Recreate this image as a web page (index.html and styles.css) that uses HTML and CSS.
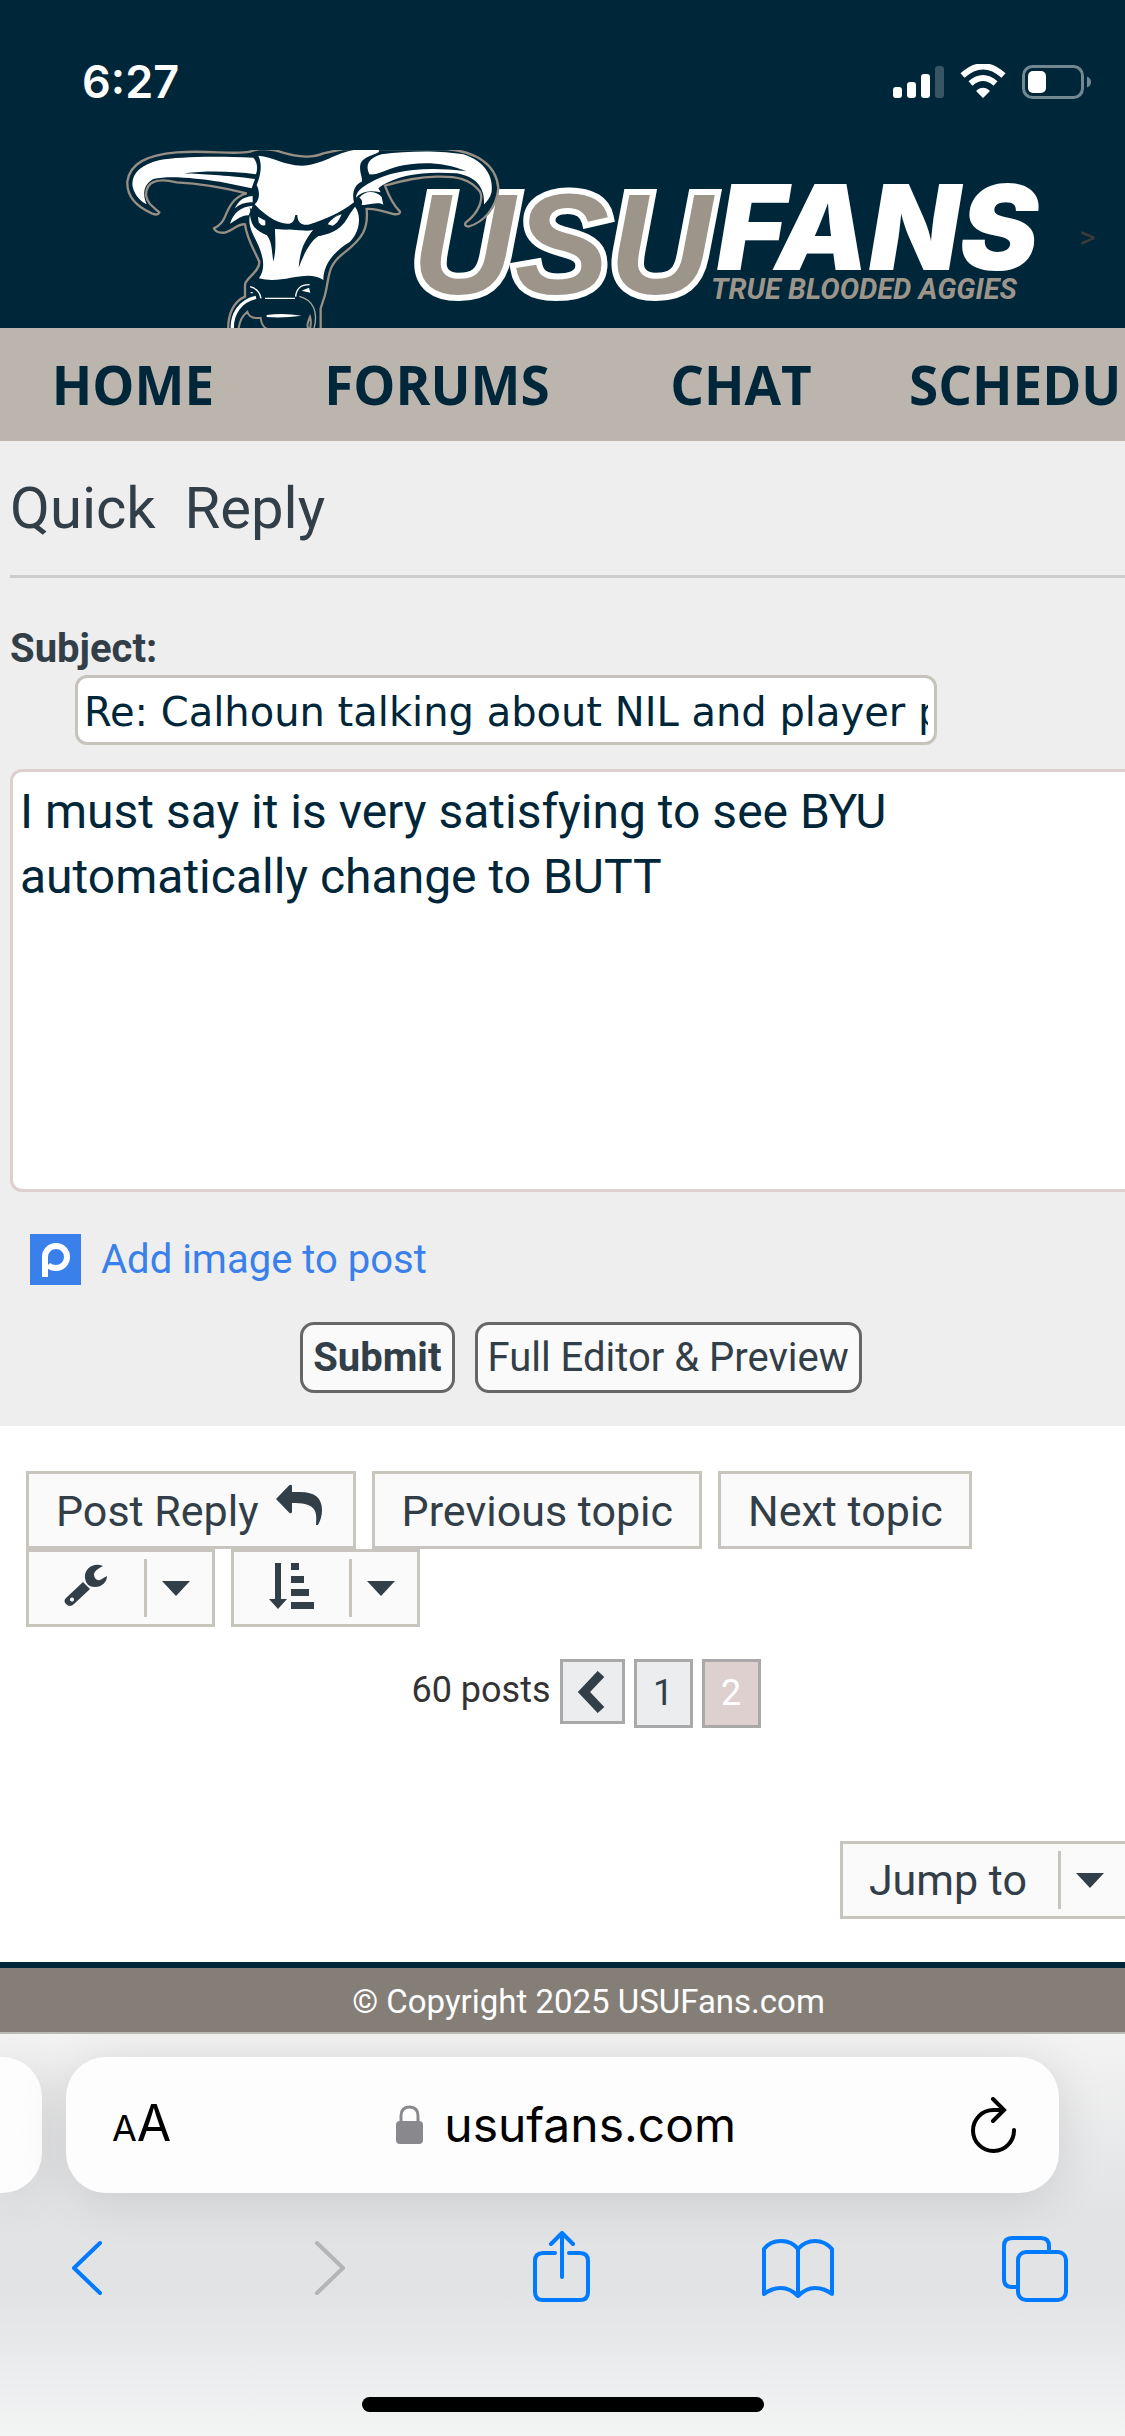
FILE: index.html
```html
<!DOCTYPE html>
<html lang="en">
<head>
<meta charset="utf-8">
<meta name="viewport" content="width=device-width, initial-scale=1">
<title>USUFans - Quick Reply</title>
<link rel="stylesheet" href="styles.css">
</head>
<body>
<div class="status-bar">
  <span class="clock">6:27</span>
  <svg class="status-icons" viewBox="0 0 200 36" aria-label="Signal, Wi-Fi, battery">
    <g fill="#fff">
      <rect x="1" y="23" width="9" height="11" rx="3"/>
      <rect x="15" y="18" width="9" height="16" rx="3"/>
      <rect x="29" y="10" width="9" height="24" rx="3"/>
      <rect x="43" y="2" width="9" height="32" rx="3" opacity=".22"/>
      <path d="M91 34 84.500 27.500Q84 26.500 85 26Q91 21.500 97 26Q98 26.500 97.500 27.500Z"/>
      <rect x="136" y="7" width="18" height="22" rx="5"/>
      <path d="M195 12.500Q199 14 199 18Q199 22 195 23.500Z" opacity=".45"/>
    </g>
    <g fill="none" stroke="#fff">
      <path d="M70.500 11.500Q91-7 111.500 11.500" stroke-width="6"/>
      <path d="M78.500 19.500Q91 8.500 103.500 19.500" stroke-width="6"/>
      <rect x="131.500" y="2.500" width="59" height="31" rx="9" stroke-width="3" opacity=".45"/>
    </g>
  </svg>
</div>

<header class="site-header">
  <a class="logo" href="#" aria-label="USUFans home">
    <svg viewBox="0 0 1072 178">
      <text class="logo-usu" x="412" y="144">USU</text>
      <text class="logo-fans" x="717" y="120">FANS</text>
      <text class="logo-tag" x="711" y="149">TRUE BLOODED AGGIES</text>
      <g transform="translate(110 -15) scale(.33333)">
        <path fill="#00263a" stroke="#978f84" stroke-width="7" d="M355 590C352 540 370 500 405 485V450C405 430 450 410 448 380C430 340 410 310 405 268C385 265 370 285 345 293Q318 295 312 280Q335 270 345 245C355 220 370 185 410 175C330 155 260 145 200 142C140 128 108 140 108 180C112 205 125 212 148 232C145 240 138 240 125 235C80 215 50 185 52 140C60 85 110 60 200 52C300 45 370 60 420 50C440 42 470 40 500 47C560 68 610 68 640 55L700 42H1010C1100 50 1160 90 1165 160C1160 220 1120 262 1075 275Q1060 272 1068 262C1110 230 1120 190 1110 170C1080 130 1040 124 980 125C920 125 870 140 825 152C835 180 850 210 870 230Q870 240 850 237C820 230 800 220 770 222C775 280 760 310 700 355C650 395 660 420 645 480L632 520V590"/>
        <g fill="#fff">
          <path d="M430 68C300 62 200 66 150 75C90 88 62 120 68 155C75 185 95 200 110 208C98 180 98 150 130 132C180 120 260 130 330 140L425 160L435 132C340 120 280 118 222 115C300 106 370 110 438 118C445 95 440 80 430 68Z"/>
          <path d="M445 62C490 66 520 90 575 92C640 90 680 50 740 44H805C818 58 765 58 752 85C745 110 760 130 755 140C730 150 726 180 732 202C690 235 640 255 600 268C575 274 562 262 562 240H556C552 262 545 270 520 265C480 255 450 225 434 208C450 195 450 170 440 150C452 120 458 90 445 62Z"/>
          <path d="M815 58C900 46 1000 47 1060 58C1130 80 1150 130 1145 170C1140 190 1130 200 1122 208C1125 160 1100 125 1040 115C940 108 870 120 818 150L805 160L812 172Q760 160 738 188C738 165 770 148 795 135C840 112 930 90 1070 109C1000 78 920 80 860 95C825 105 805 120 778 118C765 90 775 70 815 58Z"/>
          <path d="M748 188C765 165 797 166 815 186L820 209C800 198 775 213 755 209Q760 195 748 188Z"/>
          <path d="M428 183C395 186 386 200 374 220C390 206 410 200 428 202Z"/>
          <path d="M360 266C370 235 390 215 428 212L416 241C395 240 380 255 360 266Z"/>
          <path d="M420 240C425 280 445 290 470 300C487 320 485 350 490 380C500 340 495 310 495 282C540 280 570 290 610 285C580 320 570 350 566 398C580 360 600 320 625 303C680 295 710 250 735 215C755 240 750 290 720 320C670 350 640 390 640 435C590 400 520 450 447 430C475 390 450 340 430 300C420 280 415 260 420 240Z"/>
          <path d="M444 245L466 255V270Q455 278 446 262Z"/>
          <path d="M653 265Q665 245 698 235Q685 265 668 272Z"/>
          <path d="M575 467L597 458L601 473Z"/>
          <path d="M470 540Q520 533 575 542Q520 550 470 546Z"/>
        </g>
        <path fill="#00263a" d="M418 215C430 235 470 262 520 275L558 262L600 276C640 265 690 240 736 205L712 250C690 290 650 300 620 303C600 310 590 330 580 350C590 325 595 300 610 285Q580 290 556 275Q540 287 495 282L494 340C490 310 485 300 470 300C440 290 430 260 418 215Z"/>
        <path fill="#fff" d="M444 245L466 257V270Q455 276 446 262ZM653 268Q665 248 695 238Q684 266 668 272Z"/>
        <g fill="none" stroke="#fff" stroke-width="4">
          <path d="M420 455Q448 462 453 490M422 473H428M465 490H555M557 485Q560 448 599 449"/>
          <path d="M568 484C610 495 625 530 612 580" stroke="#aaa59c"/>
          <path d="M438 487C388 498 365 540 367 582" stroke-width="10"/>
          <path d="M386 582C388 555 400 540 412 530Q418 552 452 549Q455 575 472 582M600 582Q585 580 600 545Q605 560 600 582" stroke="#978f84" stroke-width="6"/>
        </g>
      </g>
    </svg>
  </a>
  <span class="header-more">&gt;</span>
</header>

<nav class="main-nav">
  <a href="#">HOME</a><a href="#">FORUMS</a><a href="#">CHAT</a><a href="#">SCHEDULE</a>
</nav>

<main>
  <form class="quick-reply">
    <h2>Quick&nbsp; Reply</h2>
    <label for="subject">Subject:</label>
    <input id="subject" class="subject" type="text" value="Re: Calhoun talking about NIL and player pay">
    <textarea class="message" aria-label="Message">I must say it is very satisfying to see BYU
automatically change to BUTT</textarea>
    <a class="add-image" href="#">
      <svg viewBox="0 0 51 51" aria-hidden="true"><rect width="51" height="51" fill="#3a80ea"/><path d="M15 43V23A11 11 0 1 1 26 34Q21 34 18 31" fill="none" stroke="#fff" stroke-width="6"/></svg>
      Add image to post
    </a>
    <div class="form-actions">
      <button class="btn submit" type="submit">Submit</button>
      <button class="btn" type="button">Full Editor &amp; Preview</button>
    </div>
  </form>

  <section class="topic-tools">
    <div class="action-bar">
      <button class="tool" type="button">Post Reply
        <svg class="reply-icon" viewBox="0 0 48 42" aria-hidden="true"><path d="M1 15 14.500 1Q16.500 0 17 2V8H25C40 8 47 14 47 26Q47 34 43 41H41C43 24 38 19 17 19V28Q16.500 30 14.500 29Z"/></svg>
      </button>
      <button class="tool" type="button">Previous topic</button>
      <button class="tool" type="button">Next topic</button>
      <button class="tool split" type="button" aria-label="Topic tools">
        <svg class="tool-icon" viewBox="0 0 46 46" aria-hidden="true"><path fill-rule="evenodd" d="M19 19 26 26 10 41Q6 45 2 41Q-1 38 2 35ZM6 36A2 2 0 1 0 10 37A2 2 0 1 0 6 36Z"/><path d="M39 3C29-1 20 6 21 15Q22 24 31 24C38 24 43 19 43 13L36 17Q31 18 30 12Q29 8 39 3Z"/></svg>
        <span class="caret"></span>
      </button>
      <button class="tool split" type="button" aria-label="Sort options">
        <svg class="tool-icon" viewBox="0 0 46 46" aria-hidden="true"><path d="M6 0H12V36H18L9 46 0 36H6ZM22 0H30V7H22ZM22 13H35V20H22ZM22 26H40V33H22ZM22 39H45V46H22Z"/></svg>
        <span class="caret"></span>
      </button>
    </div>
    <div class="pagination">
      <span>60 posts</span>
      <a class="page prev" href="#" aria-label="Previous page"><svg viewBox="0 0 30 42" aria-hidden="true"><path d="M24 3 7 21 24 39" fill="none" stroke="#323e48" stroke-width="9"/></svg></a>
      <a class="page" href="#">1</a>
      <a class="page current" href="#" aria-current="page">2</a>
    </div>
    <div class="jump-row">
      <button class="tool split jump" type="button">Jump to<span class="caret"></span></button>
    </div>
  </section>
</main>

<footer class="copyright">© Copyright 2025 USUFans.com</footer>

<div class="browser-bar">
  <div class="tabs">
    <div class="tab tab-previous"></div>
    <div class="tab address">
      <button class="text-size" type="button" aria-label="Page settings"><small>A</small>A</button>
      <span class="url">
        <svg viewBox="0 0 28 40" aria-hidden="true"><rect y="16" width="27" height="23" rx="4" fill="#89888d"/><path d="M5 18V11Q5 2 13.500 2T22 11V18" fill="none" stroke="#89888d" stroke-width="3"/></svg>
        usufans.com
      </span>
      <button class="reload" type="button" aria-label="Reload"><svg viewBox="0 0 46 56"><path d="M43 33A20.500 20.500 0 1 1 22.500 13H32M22 2 33 13 22 24" fill="none" stroke="#000" stroke-width="4" stroke-linecap="round"/></svg></button>
    </div>
  </div>
  <div class="toolbar">
    <button type="button" aria-label="Back"><svg viewBox="0 0 72 72"><path d="M50 12 24 37 50 62"/></svg></button>
    <button type="button" aria-label="Forward" disabled><svg viewBox="0 0 72 72"><path d="M30 12 56 37 30 62"/></svg></button>
    <button type="button" aria-label="Share"><svg viewBox="0 0 72 72"><path d="M30 22H18Q10 22 10 30V61Q10 69 18 69H55Q63 69 63 61V30Q63 22 55 22H44M37 46V3M26 13 37 2 48 13"/></svg></button>
    <button type="button" aria-label="Bookmarks"><svg viewBox="0 0 72 72"><path d="M2 63V18Q8 10 19 10T36 18Q43 10 53 10T70 18V63Q62 57 53 57T36 65Q28 57 19 57T2 63ZM36 18V65"/></svg></button>
    <button type="button" aria-label="Tabs"><svg viewBox="0 0 72 72"><path d="M19 56H13Q5 56 5 48V15Q5 7 13 7H42Q50 7 50 15V21"/><rect x="19" y="21" width="48" height="48" rx="8"/></svg></button>
  </div>
  <div class="home-indicator"></div>
</div>
</body>
</html>
```
FILE: styles.css
```css
*,
*::before,
*::after {
  box-sizing: border-box;
}

body {
  margin: 0;
  overflow-x: hidden;
  background: #fff;
  color: #323e48;
  font-family: Roboto, sans-serif;
  font-size: 40px;
}

a {
  color: inherit;
  text-decoration: none;
}

button {
  margin: 0;
  padding: 0;
  border: 0;
  background: none;
  color: inherit;
  font: inherit;
}

svg {
  display: block;
}

/* Status bar */
.status-bar {
  display: flex;
  align-items: flex-start;
  justify-content: space-between;
  height: 150px;
  padding: 64px 33px 0 82px;
  background: #00263a;
  color: #fff;
}

.clock {
  font: 600 45px/36px Inter, sans-serif;
}

.status-icons {
  width: 200px;
  height: 36px;
}

/* Header */
.site-header {
  display: flex;
  align-items: center;
  overflow: hidden;
  background: #00263a;
}

.logo svg {
  width: 1072px;
  height: 178px;
}

.logo-usu {
  fill: #9d958a;
  stroke: #fff;
  stroke-width: 12px;
  paint-order: stroke;
  font: italic 700 142px "Liberation Sans", sans-serif;
}

.logo-fans {
  fill: #fff;
  font: italic 900 118px Inter, sans-serif;
}

.logo-tag {
  fill: #9d958a;
  font: italic 700 29px Roboto, sans-serif;
}

.header-more {
  padding: 0 0 4px 7px;
  color: #3d3a38;
  font-size: 32px;
}

.main-nav {
  display: grid;
  grid-template-columns: 285px repeat(3, 304px);
  overflow: hidden;
  background: #bbb5ae;
  color: #00263a;
  font: 700 53px/113px "Open Sans", sans-serif;
  text-align: center;
}

.main-nav a:first-child {
  padding-right: 19px;
}

/* Quick reply form */
.quick-reply {
  display: flex;
  flex-direction: column;
  align-items: flex-start;
  padding: 33px 0 33px 10px;
  background: #eee;
}

.quick-reply h2 {
  align-self: stretch;
  margin: 0 0 48px;
  padding-bottom: 32px;
  border-bottom: 3px solid #ccc;
  font-size: 58px;
  font-weight: 400;
  line-height: 69px;
}

.quick-reply label {
  margin-bottom: 3px;
  font-weight: 700;
  line-height: 46px;
}

.subject {
  width: 862px;
  max-width: 90%;
  height: 70px;
  margin-left: 65px;
  padding: 4px 6px 0;
  border: 3px solid #c6c2bc;
  border-radius: 12px;
  background: #fff;
  color: #00263a;
  font: 40px "DejaVu Sans", sans-serif;
}

.message {
  align-self: stretch;
  height: 423px;
  margin: 24px 0 42px;
  padding: 7px;
  overflow: hidden;
  border: 3px solid #ddd0cf;
  border-right: 0;
  border-radius: 12px 0 0 12px;
  resize: none;
  color: #00263a;
  font: 48px/65px Roboto, sans-serif;
}

.add-image {
  display: flex;
  align-items: center;
  gap: 20px;
  margin-left: 20px;
  color: #3a80ea;
  line-height: 51px;
}

.add-image svg {
  width: 51px;
  height: 51px;
}

.form-actions {
  display: flex;
  align-self: stretch;
  justify-content: center;
  gap: 20px;
  margin-top: 37px;
  padding-left: 27px;
}

.btn {
  height: 71px;
  padding: 0 10px;
  border: 3px solid #666;
  border-radius: 14px;
  background: #fafafa;
}

.submit {
  font-weight: 700;
}

/* Topic tools */
.topic-tools {
  padding: 45px 0 43px 26px;
}

.action-bar {
  display: flex;
  flex-wrap: wrap;
  gap: 0 16px;
  max-width: 1000px;
}

.tool {
  display: flex;
  align-items: center;
  height: 78px;
  padding: 2px 26px 0 27px;
  border: 3px solid #c8c4be;
  background: #fafafa;
  font-size: 43px;
}

.reply-icon {
  width: 48px;
  height: 42px;
  margin: 0 4px 12px 16px;
  fill: #323e48;
}

.split {
  padding: 0 22px 0 35px;
}

.tool-icon {
  width: 46px;
  height: 46px;
  margin-bottom: 4px;
  fill: #323e48;
}

.caret {
  display: flex;
  align-items: center;
  height: 58px;
  margin-left: 34px;
  padding-left: 15px;
  border-left: 3px solid #c8c4be;
}

.caret::after {
  content: "";
  border: solid transparent;
  border-width: 15px 14px 0;
  border-top-color: #323e48;
}

.pagination {
  display: flex;
  align-items: flex-start;
  justify-content: center;
  gap: 9px;
  margin-top: 32px;
  padding-left: 21px;
  color: #333;
  font-size: 36px;
  line-height: 62px;
}

.page {
  width: 59px;
  height: 69px;
  border: 3px solid #a9a9a9;
  background: #ecedef;
  color: #323e48;
  line-height: 63px;
  text-align: center;
}

.prev {
  display: grid;
  place-items: center;
  width: 65px;
  height: 65px;
}

.prev svg {
  width: 30px;
  height: 42px;
}

.current {
  background: #ddd0cf;
  color: #fff;
}

.jump-row {
  display: flex;
  justify-content: flex-end;
  margin-top: 113px;
}

.jump {
  padding: 0 21px 0 26px;
  border-right: 0;
}

.jump .caret {
  margin-left: 31px;
}

.copyright {
  padding: 4px 0 0 52px;
  border-top: 6px solid #00263a;
  border-bottom: 2px solid #bbb9b6;
  background: #857e77;
  color: #fff;
  font-size: 33px;
  line-height: 60px;
  text-align: center;
}

/* Browser controls */
.browser-bar {
  padding: 23px 0 24px;
  overflow: hidden;
  background: linear-gradient(#f3f3f3, #e2e3e5 45%, #e2e3e5 65%, #f3f4f4);
}

.tabs {
  display: flex;
  gap: 24px;
  padding-right: 66px;
}

.tab {
  height: 136px;
  border-radius: 40px;
  background: #fdfdfd;
  box-shadow: 0 6px 50px rgba(0, 0, 0, .12);
}

.tab-previous {
  width: 42px;
  border-radius: 0 40px 40px 0;
}

.address {
  display: flex;
  flex: 1;
  align-items: center;
  justify-content: space-between;
  padding: 0 42px 0 46px;
  color: #000;
  font: 48px/60px Inter, sans-serif;
}

.text-size {
  font-size: 50px;
}

.text-size small {
  font-size: 36px;
}

.url {
  display: flex;
  align-items: center;
  gap: 20px;
  padding-right: 10px;
}

.url svg {
  width: 28px;
  height: 40px;
}

.reload svg {
  width: 46px;
  height: 56px;
}

.toolbar {
  display: flex;
  justify-content: space-between;
  margin: 38px 54px 0 50px;
}

.toolbar svg {
  width: 72px;
  height: 72px;
  fill: none;
  stroke: #007aff;
  stroke-width: 4px;
  stroke-linecap: round;
  stroke-linejoin: round;
}

.toolbar button:disabled svg {
  stroke: #b4b5b7;
}

.home-indicator {
  width: 402px;
  height: 15px;
  margin: 94px auto 0;
  border-radius: 8px;
  background: #000;
}
```
